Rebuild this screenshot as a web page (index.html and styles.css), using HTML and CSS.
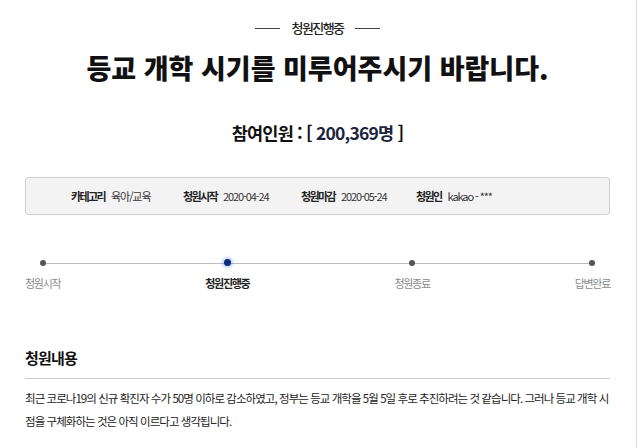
FILE: index.html
```html
<!DOCTYPE html>
<html lang="ko">
<head>
<meta charset="utf-8">
<link rel="stylesheet" href="styles.css">
</head>
<body>
<div class="page">
  <div class="inner">
    <div class="status"><span class="dash"></span><span class="status-text">청원진행중</span><span class="dash"></span></div>
    <h1 class="title">등교 개학 시기를 미루어주시기 바랍니다.</h1>
    <div class="count">참여인원 : [ <span class="num">200,369명</span> ]</div>
    <div class="info">
      <div class="info-item"><b>카테고리</b><span>육아/교육</span></div>
      <div class="info-item"><b>청원시작</b><span>2020-04-24</span></div>
      <div class="info-item"><b>청원마감</b><span>2020-05-24</span></div>
      <div class="info-item"><b>청원인</b><span>kakao - ***</span></div>
    </div>
    <div class="steps">
      <div class="step"><span class="dot"></span><span class="label">청원시작</span></div>
      <div class="step active"><span class="dot"></span><span class="label">청원진행중</span></div>
      <div class="step"><span class="dot"></span><span class="label">청원종료</span></div>
      <div class="step"><span class="dot"></span><span class="label">답변완료</span></div>
    </div>
    <h2 class="section">청원내용</h2>
    <p class="content">최근 코로나19의 신규 확진자 수가 50명 이하로 감소하였고, 정부는 등교 개학을 5월 5일 후로 추진하려는 것 같습니다. 그러나 등교 개학 시<br>점을 구체화하는 것은 아직 이르다고 생각됩니다.</p>
  </div>
</div>
</body>
</html>
```
FILE: styles.css
```css
html, body {
  margin: 0;
  padding: 0;
  background: #fff;
}
body {
  font-family: "Noto Sans CJK KR", "Noto Sans", sans-serif;
  color: #111;
}
.page {
  width: 637px;
  height: 448px;
  border-right: 1px solid #dcdcdc;
  box-sizing: border-box;
  overflow: hidden;
}
.inner {
  padding: 0 26px 0 25px;
}
.status {
  display: flex;
  justify-content: center;
  align-items: center;
  gap: 12px;
  padding-top: 18px;
  height: 20px;
}
.dash {
  width: 25px;
  height: 1px;
  background: #444;
}
.status-text {
  font-size: 13px;
  font-weight: 500;
  letter-spacing: -1.6px;
  color: #222;
  line-height: 20px;
}
.title {
  margin: 0;
  margin-top: 12px;
  text-align: center;
  font-size: 27px;
  font-weight: 900;
  letter-spacing: 0;
  line-height: 36px;
  color: #111;
}
.count {
  margin-top: 36px;
  text-align: center;
  font-size: 17.5px;
  font-weight: 700;
  letter-spacing: -0.8px;
  line-height: 22px;
  color: #111;
}
.num {
  color: #1d2440;
}
.info {
  margin-top: 33px;
  height: 38px;
  box-sizing: border-box;
  background: #f3f3f3;
  border: 1px solid #cfcfcf;
  border-radius: 3px;
  display: flex;
  align-items: center;
  padding-left: 45px;
  color: #222;
}
.info-item {
  display: flex;
  align-items: center;
  gap: 6px;
}
.info-item:nth-child(1) { width: 112px; }
.info-item:nth-child(2) { width: 118px; }
.info-item:nth-child(3) { width: 115px; }
.info-item b {
  font-weight: 700;
  font-size: 11px;
  letter-spacing: -1.6px;
}
.info-item span {
  font-size: 11px;
  letter-spacing: -1.1px;
  color: #333;
}
.steps {
  position: relative;
  margin-top: 45px;
  display: flex;
  justify-content: space-between;
}
.steps::before {
  content: "";
  position: absolute;
  left: 19px;
  right: 19px;
  top: 3px;
  height: 1px;
  background: #bdbdbd;
}
.step {
  display: flex;
  flex-direction: column;
  align-items: center;
  gap: 9px;
}
.dot {
  position: relative;
  width: 6px;
  height: 6px;
  border-radius: 50%;
  background: #555;
}
.step.active .dot {
  width: 7px;
  height: 7px;
  margin-top: -1px;
  background: #0b2a7c;
  box-shadow: 0 0 3px 2px rgba(80, 130, 230, 0.35);
}
.label {
  font-size: 11px;
  letter-spacing: -1.3px;
  color: #8a8a8a;
  line-height: 16px;
}
.step.active .label {
  color: #222;
  font-weight: 700;
}
.section {
  margin: 0;
  margin-top: 56px;
  font-size: 15px;
  font-weight: 700;
  letter-spacing: -0.8px;
  line-height: 22px;
  padding-bottom: 9px;
  border-bottom: 1px solid #c9c9c9;
  color: #111;
}
.content {
  margin: 0;
  margin-top: 8px;
  font-size: 11.5px;
  letter-spacing: -0.95px;
  line-height: 23px;
  color: #222;
  white-space: nowrap;
}
```
